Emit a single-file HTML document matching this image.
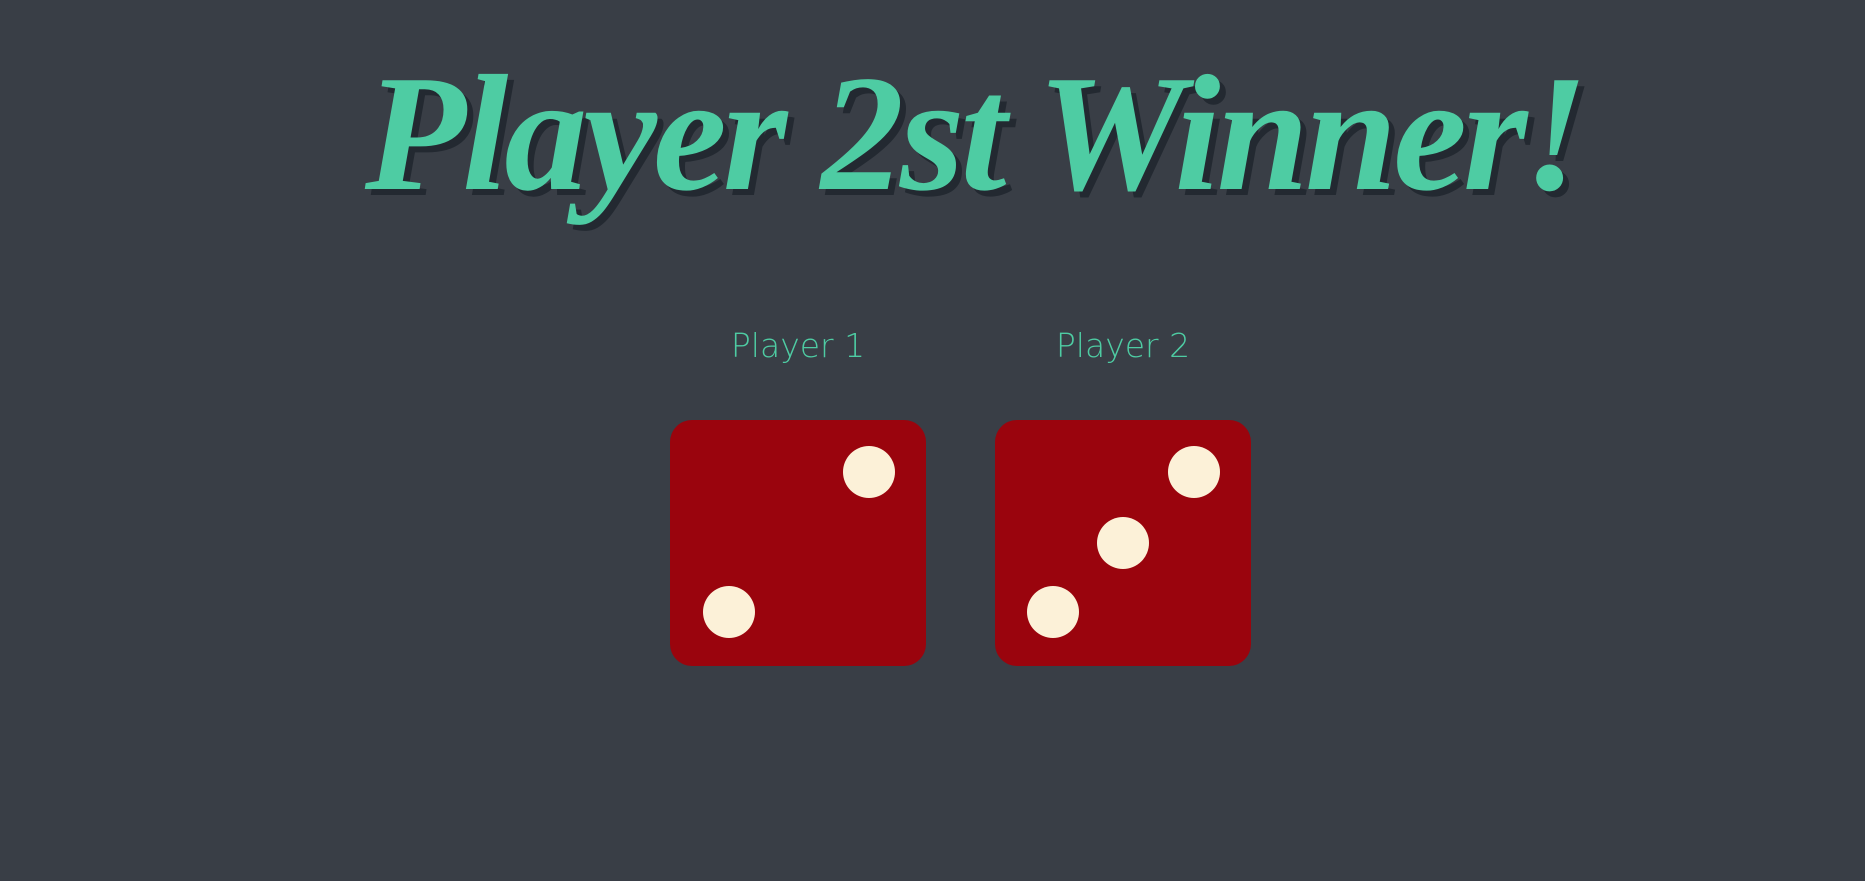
<!DOCTYPE html>
<html><head><style>
html,body{margin:0;padding:0;}
body{width:1865px;height:881px;background:#393e46;position:relative;overflow:hidden;font-family:"Liberation Serif",serif;}
h1{position:absolute;left:42px;width:1865px;top:38px;margin:0;text-align:center;font-size:166px;line-height:190px;font-weight:bold;font-style:italic;color:#4ecca3;text-shadow:6px 6px 0 #232931;letter-spacing:-4px;}
.lbl{position:absolute;top:326px;width:256px;text-align:center;color:#4ecca3;font-family:"Comic Sans MS","DejaVu Sans",sans-serif;font-size:33px;font-weight:300;}
.die{position:absolute;top:420px;width:256px;height:246px;background:#9a040d;border-radius:22px;}
.pip{position:absolute;width:52px;height:52px;border-radius:50%;background:#fcf1d8;margin:-26px 0 0 -26px;}
</style></head><body>
<h1>Player 2st Winner!</h1>
<div class="lbl" style="left:670px">Player 1</div>
<div class="lbl" style="left:995px">Player 2</div>
<div class="die" style="left:670px">
<div class="pip" style="left:199px;top:52px"></div>
<div class="pip" style="left:59px;top:192px"></div>
</div>
<div class="die" style="left:995px">
<div class="pip" style="left:199px;top:52px"></div>
<div class="pip" style="left:128px;top:123px"></div>
<div class="pip" style="left:58px;top:192px"></div>
</div>
</body></html>
